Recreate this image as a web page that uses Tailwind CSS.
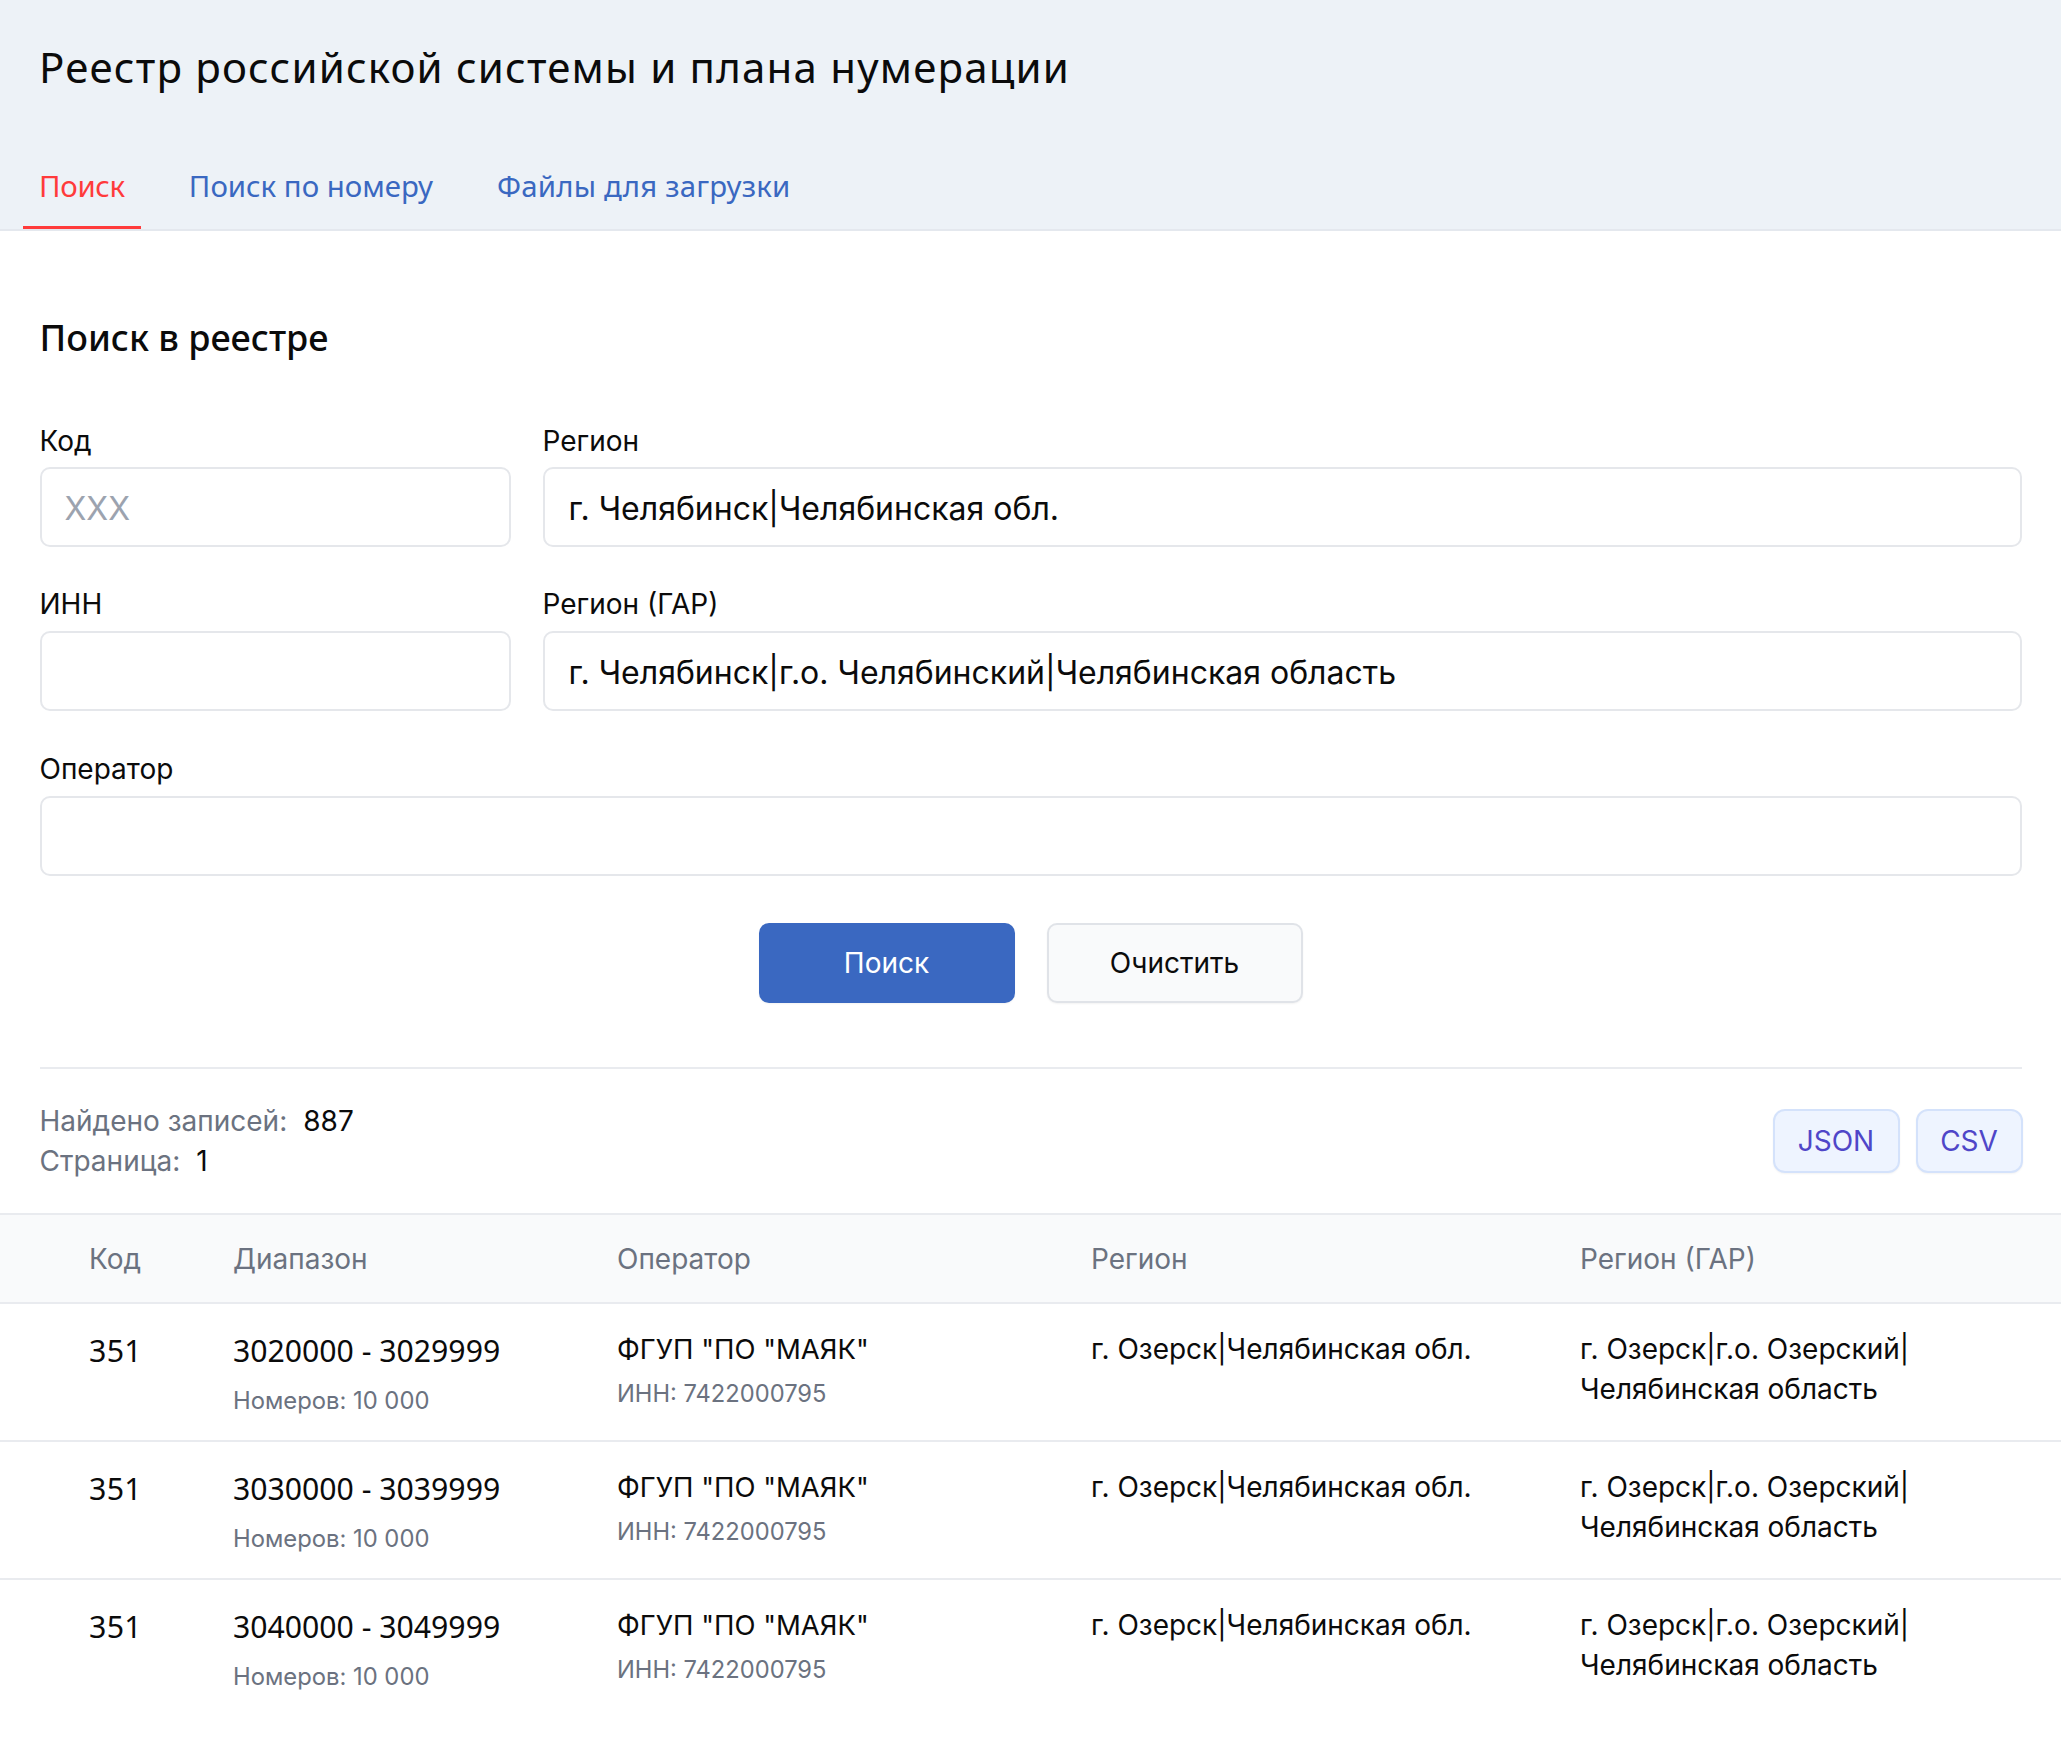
<!doctype html>
<html lang="ru"><head><meta charset="utf-8"><script src="https://cdn.jsdelivr.net/npm/@tailwindcss/browser@4"></script></head>
<body class="bg-white font-['Inter',sans-serif] text-[#0b0b0b]">
<header class="h-[231px] bg-[#edf2f7] border-b-2 border-[#e4e8ee] flex flex-col">
  <h1 class="pl-[39px] pt-[38px] h-[138px] font-['Noto_Sans',sans-serif] text-[42px] leading-[58px] font-normal tracking-[1.18px]">Реестр российской системы и плана нумерации</h1>
  <nav class="flex mt-auto pl-[23px] gap-[32px] font-['Noto_Sans',sans-serif] text-[29.4px] leading-[40px] text-[#3a68c1]">
    <a class="px-[16px] pb-[20px] pt-[8px] border-b-[3px] border-[#ff3b3b] text-[#ff3b3b] tracking-[-0.3px]">Поиск</a>
    <a class="px-[16px] pb-[20px] pt-[8px] border-b-[3px] border-transparent">Поиск по номеру</a>
    <a class="px-[16px] pb-[20px] pt-[8px] border-b-[3px] border-transparent tracking-[0.2px]">Файлы для загрузки</a>
  </nav>
</header>
<main class="px-[39.5px]">
  <h2 class="mt-[82px] font-['Noto_Sans',sans-serif] text-[36px] leading-[50px] font-medium">Поиск в реестре</h2>
  <form class="mt-[58px] grid grid-cols-[471px_1fr] gap-x-[32px] text-[28px]">
    <div><label class="block leading-[40px] h-[46px]">Код</label><div class="h-[80px] border-2 border-[#e5e7eb] rounded-[10px] pl-[23px] pr-[24px] text-[32px] leading-[80px] text-[#9ca3af]">XXX</div></div>
    <div><label class="block leading-[40px] h-[46px]">Регион</label><div class="h-[80px] border-2 border-[#e5e7eb] rounded-[10px] px-[24px] text-[32px] leading-[80px]">г. Челябинск|Челябинская обл.</div></div>
    <div class="mt-[37px]"><label class="block leading-[40px] h-[47px]">ИНН</label><div class="h-[80px] border-2 border-[#e5e7eb] rounded-[10px]"></div></div>
    <div class="mt-[37px]"><label class="block leading-[40px] h-[47px]">Регион (ГАР)</label><div class="h-[80px] border-2 border-[#e5e7eb] rounded-[10px] px-[24px] text-[32px] leading-[80px]">г. Челябинск|г.о. Челябинский|Челябинская область</div></div>
    <div class="col-span-2 mt-[38px]"><label class="block leading-[40px] h-[47px]">Оператор</label><div class="h-[80px] border-2 border-[#e5e7eb] rounded-[10px]"></div></div>
  </form>
  <div class="mt-[47px] flex justify-center gap-[32px] text-[28px]">
    <button class="w-[256px] h-[80px] bg-[#3a68c1] text-white rounded-[10px] shadow-xs">Поиск</button>
    <button class="w-[256px] h-[80px] bg-[#f9fafb] border-2 border-[#e0e3e8] rounded-[10px] shadow-xs">Очистить</button>
  </div>
  <div class="mt-[64px] border-t-2 border-[#e9ebef]"></div>
  <div class="mt-[32px] flex justify-between items-start text-[28px] leading-[40px]">
    <div>
      <div><span class="text-[#6b7280]">Найдено записей:</span><span class="ml-[16px]">887</span></div>
      <div><span class="text-[#6b7280]">Страница:</span><span class="ml-[16px]">1</span></div>
    </div>
    <div class="flex gap-[16px] text-[#4f46c8] pt-[8px] mr-[-1px]">
      <button class="w-[127px] h-[64px] bg-[#eef4ff] border-2 border-[#d4e2fb] rounded-[12px] shadow-xs">JSON</button>
      <button class="w-[107px] h-[64px] bg-[#eef4ff] border-2 border-[#d4e2fb] rounded-[12px] shadow-xs">CSV</button>
    </div>
  </div>
</main>
<section class="mt-[32px] text-[28px]">
  <div class="h-[91px] grid grid-cols-[233px_384px_474px_489px_1fr] items-center bg-[#f9fafb] border-y-2 border-[#e9ebef] text-[#6b7280]">
    <div class="pl-[89px]">Код</div><div>Диапазон</div><div>Оператор</div><div>Регион</div><div>Регион (ГАР)</div>
  </div>
  <div class="h-[137.8px] grid grid-cols-[233px_384px_474px_489px_1fr] border-b-2 border-[#e9ebef] pt-[25px]">
    <div class="pl-[89px] font-['Noto_Sans',sans-serif] text-[30.3px] leading-[44px] tracking-[0.3px]">351</div>
    <div><div class="font-['Noto_Sans',sans-serif] text-[30.2px] leading-[44px]">3020000 - 3029999</div><div class="text-[23.8px] text-[#6b7280] leading-[36px] mt-[10px]">Номеров: 10 000</div></div>
    <div><div class="leading-[40px] text-[27.5px]">ФГУП "ПО "МАЯК"</div><div class="text-[23.7px] text-[#6b7280] leading-[36px] mt-[7px]">ИНН: 7422000795</div></div>
    <div class="leading-[40px]">г. Озерск|Челябинская обл.</div>
    <div class="leading-[40px]">г. Озерск|г.о. Озерский|<br>Челябинская область</div>
  </div>
  <div class="h-[137.8px] grid grid-cols-[233px_384px_474px_489px_1fr] border-b-2 border-[#e9ebef] pt-[25px]">
    <div class="pl-[89px] font-['Noto_Sans',sans-serif] text-[30.3px] leading-[44px] tracking-[0.3px]">351</div>
    <div><div class="font-['Noto_Sans',sans-serif] text-[30.2px] leading-[44px]">3030000 - 3039999</div><div class="text-[23.8px] text-[#6b7280] leading-[36px] mt-[10px]">Номеров: 10 000</div></div>
    <div><div class="leading-[40px] text-[27.5px]">ФГУП "ПО "МАЯК"</div><div class="text-[23.7px] text-[#6b7280] leading-[36px] mt-[7px]">ИНН: 7422000795</div></div>
    <div class="leading-[40px]">г. Озерск|Челябинская обл.</div>
    <div class="leading-[40px]">г. Озерск|г.о. Озерский|<br>Челябинская область</div>
  </div>
  <div class="h-[137.8px] grid grid-cols-[233px_384px_474px_489px_1fr] pt-[25px]">
    <div class="pl-[89px] font-['Noto_Sans',sans-serif] text-[30.3px] leading-[44px] tracking-[0.3px]">351</div>
    <div><div class="font-['Noto_Sans',sans-serif] text-[30.2px] leading-[44px]">3040000 - 3049999</div><div class="text-[23.8px] text-[#6b7280] leading-[36px] mt-[10px]">Номеров: 10 000</div></div>
    <div><div class="leading-[40px] text-[27.5px]">ФГУП "ПО "МАЯК"</div><div class="text-[23.7px] text-[#6b7280] leading-[36px] mt-[7px]">ИНН: 7422000795</div></div>
    <div class="leading-[40px]">г. Озерск|Челябинская обл.</div>
    <div class="leading-[40px]">г. Озерск|г.о. Озерский|<br>Челябинская область</div>
  </div>
</section>
</body></html>
